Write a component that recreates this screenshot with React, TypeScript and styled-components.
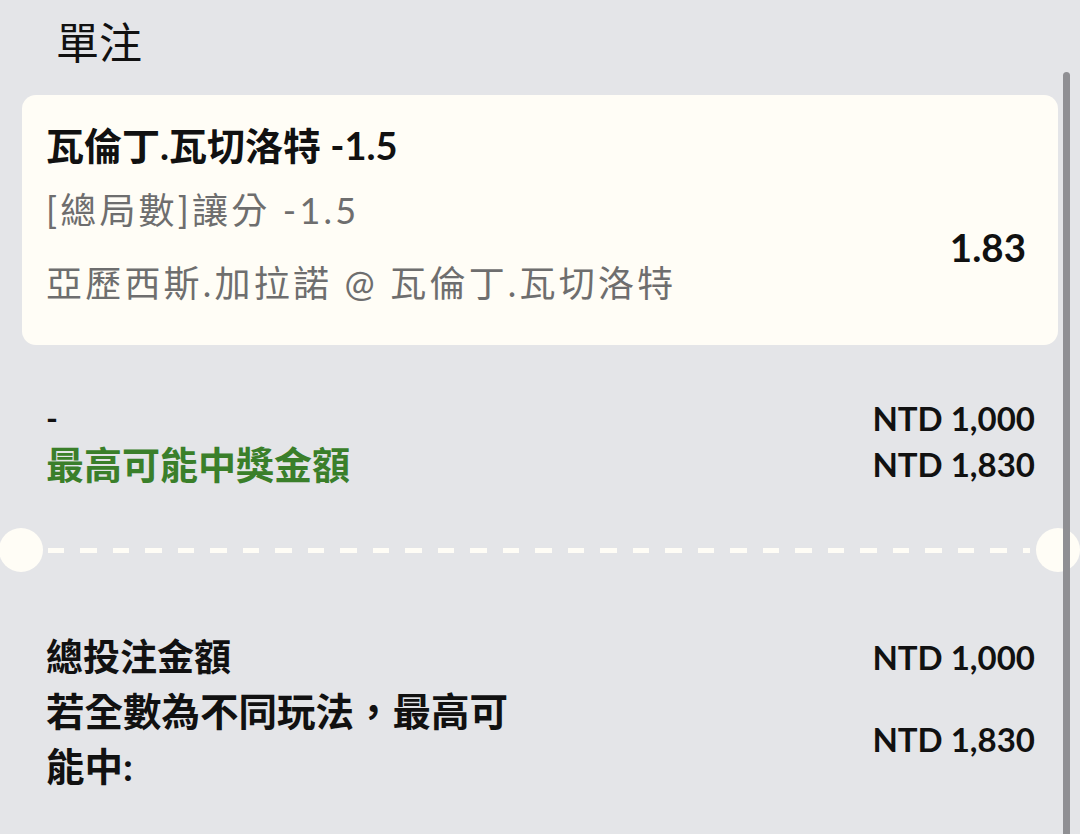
import React from "react";
import styled, { createGlobalStyle } from "styled-components";

const GlobalStyle = createGlobalStyle`
  html, body {
    margin: 0;
    padding: 0;
    background: #e4e5e8;
    overflow: hidden;
  }
  body {
    font-family: "Lato", "Noto Sans CJK TC", sans-serif;
    color: #111;
  }
`;

const Page = styled.div`
  position: relative;
  width: 1080px;
  height: 834px;
  overflow: hidden;
  background: #e4e5e8;
`;

const Scrollbar = styled.div`
  position: absolute;
  top: 72px;
  left: 1063px;
  width: 7px;
  height: 800px;
  border-radius: 4px;
  background: #8f8f93;
`;

const Title = styled.h1`
  margin: 0;
  padding: 12px 0 0 56px;
  height: 81px;
  box-sizing: border-box;
  font-family: "Noto Sans CJK TC", sans-serif;
  font-weight: 400;
  font-size: 43px;
  line-height: 56px;
  color: #111;
`;

const Card = styled.section`
  margin: 14px 22px 0 22px;
  height: 250px;
  box-sizing: border-box;
  padding: 24px 32px 0 24px;
  border-radius: 14px;
  background: #fffdf6;
  display: flex;
  flex-direction: column;
`;

const BetName = styled.div`
  font-size: 38px;
  font-weight: 700;
  line-height: 52px;
  color: #111;
`;

const CardBody = styled.div`
  margin-top: 3px;
  display: flex;
  align-items: center;
  justify-content: space-between;
`;

const Lines = styled.div`
  display: flex;
  flex-direction: column;
`;

const Meta = styled.div`
  font-size: 36px;
  letter-spacing: 3.2px;
  line-height: 73px;
  color: #6e6e6e;
`;

const Odds = styled.div`
  font-size: 38.5px;
  font-weight: 700;
  color: #111;
`;

const Summary = styled.div`
  padding: 50px 45px 0 46px;
  display: flex;
  flex-direction: column;
`;

const Row = styled.div`
  display: flex;
  justify-content: space-between;
  align-items: center;
`;

const Label = styled.div<{ $green?: boolean }>`
  font-size: 38px;
  font-weight: 700;
  line-height: 46px;
  color: ${(p) => (p.$green ? "#3a7f2a" : "#111")};
`;

const Dash = styled.div`
  font-size: 32px;
  font-weight: 700;
  line-height: 46px;
`;

const Amount = styled.div`
  font-size: 33px;
  font-weight: 700;
  line-height: 46px;
  color: #111;
  white-space: nowrap;
`;

const Divider = styled.div`
  margin-top: 41px;
  display: flex;
  align-items: center;
  height: 44px;
  margin-left: -1px;
`;

const Notch = styled.div`
  width: 44px;
  height: 44px;
  border-radius: 50%;
  background: #fffdf6;
  flex: none;
`;

const DashLine = styled.div`
  flex: 1;
  height: 5px;
  margin: 0 6px 0 5px;
  background: repeating-linear-gradient(
    to right,
    #fffdf6 0,
    #fffdf6 16px,
    transparent 16px,
    transparent 32.5px
  );
`;

const Totals = styled.div`
  padding: 57px 45px 0 46px;
  display: flex;
  flex-direction: column;
`;

const TotalLabel = styled.div<{ $wide?: boolean }>`
  font-size: ${(p) => (p.$wide ? "38.5px" : "37px")};
  font-weight: 700;
  line-height: 55px;
  color: #111;
  width: 490px;
`;

export default function App() {
  return (
    <Page>
      <GlobalStyle />
      <Title>單注</Title>
      <Card>
        <BetName>瓦倫丁.瓦切洛特 -1.5</BetName>
        <CardBody>
          <Lines>
            <Meta>[總局數]讓分 -1.5</Meta>
            <Meta>亞歷西斯.加拉諾 @ 瓦倫丁.瓦切洛特</Meta>
          </Lines>
          <Odds>1.83</Odds>
        </CardBody>
      </Card>
      <Summary>
        <Row>
          <Dash>-</Dash>
          <Amount>NTD 1,000</Amount>
        </Row>
        <Row>
          <Label $green>最高可能中獎金額</Label>
          <Amount>NTD 1,830</Amount>
        </Row>
      </Summary>
      <Divider>
        <Notch />
        <DashLine />
        <Notch />
      </Divider>
      <Totals>
        <Row>
          <TotalLabel>總投注金額</TotalLabel>
          <Amount>NTD 1,000</Amount>
        </Row>
        <Row>
          <TotalLabel $wide>若全數為不同玩法，最高可能中:</TotalLabel>
          <Amount>NTD 1,830</Amount>
        </Row>
      </Totals>
      <Scrollbar />
    </Page>
  );
}
